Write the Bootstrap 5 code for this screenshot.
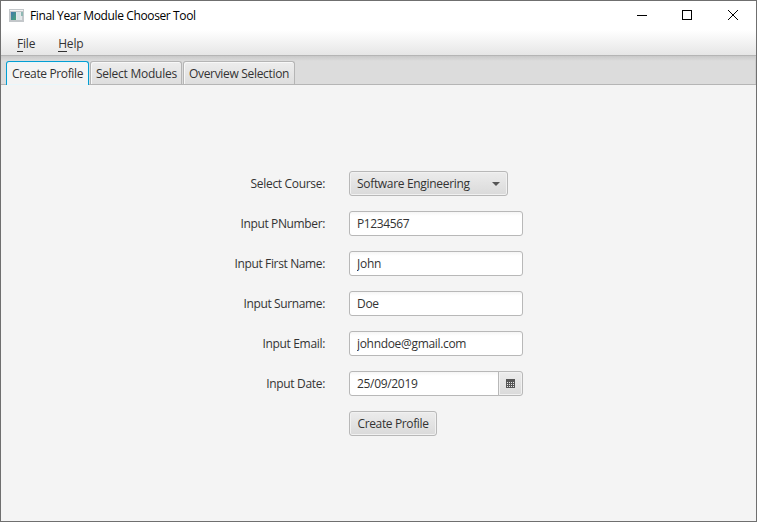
<!DOCTYPE html>
<html lang="en">
<head>
<meta charset="utf-8">
<title>Final Year Module Chooser Tool</title>
<link href="https://cdn.jsdelivr.net/npm/bootstrap@5.3.0/dist/css/bootstrap.min.css" rel="stylesheet">
<style>
body{width:757px;height:522px;overflow:hidden;font:12px/16px "Open Sans","Noto Sans",sans-serif;color:#333}
.app-window{width:757px;height:522px;border:1px solid #6f6f6f;background:#f4f4f4}
.title-bar{height:29px;background:#fff;color:#000;padding-left:8px}
.app-title{margin-left:6px;letter-spacing:-.38px}
.win-control{width:45px;height:29px}
.menu-strip{height:26px;background:linear-gradient(#fff,#e6e6e6);border-bottom:1px solid #b5b5b5;padding:6px 0 0 16px;letter-spacing:-.2px}
.menu-strip .entry{margin-right:23px;height:16px}
.menu-strip .entry span{display:inline-block;height:16px;border-bottom:1px solid #333}
.tab-strip{height:29px;padding:5px 0 0 5px;background:linear-gradient(#c9c9c9,#dcdcdc 5px);border-bottom:1px solid #b5b5b5;box-shadow:inset -1px 0 #cfcfcf}
.tab-item{height:23px;border:1px solid #b5b5b5;border-bottom:0;border-radius:3px 3px 0 0;background:linear-gradient(#ededed,#dedede);box-shadow:inset 1px 1px #f8f8f8;white-space:nowrap;padding:4px 0 0 5px;margin-right:1px}
.tab-item.current{height:24px;background:#f4f4f4;border-color:#039ed3;box-shadow:inset 0 0 0 1px #e9f7fb}
.form-area{padding:86px 0 0}
.form-line{height:25px;margin-bottom:15px}
.form-line label{width:324px;margin-right:24px;text-align:right;white-space:nowrap}
.control{height:25px;border:1px solid #b8b8b8;border-radius:3px;white-space:nowrap}
.text-box{width:174px;padding:0 7px;color:#333;background:linear-gradient(#f5f5f5,#fff 4px);font:inherit;outline:0}
.raised{background:linear-gradient(#ececec,#dadada);box-shadow:inset 0 0 0 1px #f1f1f1;color:#333;padding:0 7px;font:inherit}
.course-box{width:159px}
.date-input{width:150px;border-radius:3px 0 0 3px}
.date-button{width:25px;margin-left:-1px;padding:0;border-radius:0 3px 3px 0}
.submit-button{width:88px}
.t-tight{letter-spacing:-.32px}
.t-snug{letter-spacing:-.37px}
.t-loose{letter-spacing:-.25px}
</style>
</head>
<body>
<div class="app-window d-flex flex-column">
  <header class="title-bar d-flex align-items-center">
    <svg width="15" height="13" viewBox="0 0 15 13" shape-rendering="crispEdges"><defs><linearGradient id="pane" x2="1" y2="1"><stop stop-color="#3f78ae"/><stop offset="1" stop-color="#48a477"/></linearGradient></defs><path fill="#c3c7ca" d="M0 0h15v13H0z"/><path fill="#f5f5f5" d="M1 1h13v1H1z"/><path fill="#e4e8ea" d="M2 3h11v8H2z"/><path fill="url(#pane)" d="M2 3h5v8H2z"/><path fill="#d9e5e7" d="M8 3h3v8H8z"/><path fill="#8fb9b4" d="M12 3h2v4h-2z"/></svg>
    <span class="app-title">Final Year Module Chooser Tool</span>
    <div class="d-flex ms-auto">
      <svg class="win-control" viewBox="0 0 45 29" shape-rendering="crispEdges"><path fill="#000" d="M16 14h10v1H16z"/></svg>
      <svg class="win-control" viewBox="0 0 45 29" shape-rendering="crispEdges"><path fill="none" stroke="#000" d="M16.5 9.500h9v9h-9z"/></svg>
      <svg class="win-control" viewBox="0 0 45 29"><path fill="none" stroke="#000" d="M17 9l10 10M27 9L17 19"/></svg>
    </div>
  </header>
  <nav class="menu-strip d-flex">
    <div class="entry"><span>F</span>ile</div><div class="entry"><span>H</span>elp</div>
  </nav>
  <div class="tab-strip d-flex">
    <div class="tab-item current t-snug" style="width:83px">Create Profile</div>
    <div class="tab-item t-loose" style="width:92px">Select Modules</div>
    <div class="tab-item t-tight" style="width:112px">Overview Selection</div>
  </div>
  <main class="form-area">
    <div class="form-line d-flex align-items-center"><label class="t-tight">Select Course:</label><div class="control raised course-box d-flex align-items-center justify-content-between"><span class="t-tight">Software Engineering</span><svg width="8" height="4" viewBox="0 0 8 4"><path fill="#555" d="M0 0h8L4 4z"/></svg></div></div>
    <div class="form-line d-flex align-items-center"><label for="pn" class="t-snug">Input PNumber:</label><input id="pn" class="control text-box t-snug" value="P1234567"></div>
    <div class="form-line d-flex align-items-center"><label for="fn" class="t-snug">Input First Name:</label><input id="fn" class="control text-box t-loose" value="John"></div>
    <div class="form-line d-flex align-items-center"><label for="sn" class="t-snug">Input Surname:</label><input id="sn" class="control text-box t-tight" value="Doe"></div>
    <div class="form-line d-flex align-items-center"><label for="em" class="t-tight">Input Email:</label><input id="em" class="control text-box t-tight" value="johndoe@gmail.com"></div>
    <div class="form-line d-flex align-items-center"><label for="dt" class="t-tight">Input Date:</label><input id="dt" class="control text-box date-input t-tight" value="25/09/2019"><button class="control raised date-button d-flex align-items-center justify-content-center" aria-label="Choose date"><svg width="9" height="9" viewBox="0 0 9 9" shape-rendering="crispEdges"><path fill="#555" d="M0 0h9v9H0z"/><path stroke="#e5e5e5" stroke-dasharray="1 1" d="M1 3.500h7M1 5.500h7M1 7.500h7"/></svg></button></div>
    <div class="form-line d-flex align-items-center"><label></label><button class="control raised submit-button t-snug">Create Profile</button></div>
  </main>
</div>
<script src="https://cdn.jsdelivr.net/npm/bootstrap@5.3.0/dist/js/bootstrap.bundle.min.js"></script>
</body>
</html>
